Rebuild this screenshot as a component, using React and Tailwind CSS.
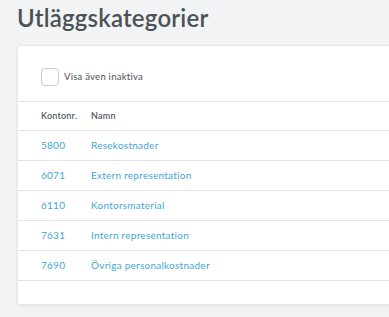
import React from "react";

const rows = [
  { nr: "5800", name: "Resekostnader" },
  { nr: "6071", name: "Extern representation" },
  { nr: "6110", name: "Kontorsmaterial" },
  { nr: "7631", name: "Intern representation" },
  { nr: "7690", name: "Övriga personalkostnader" },
];

const App = () => {
  return (
    <div
      className="h-[317px] w-[389px] overflow-hidden bg-[#f2f3f5] pl-[17px]"
      style={{ fontFamily: "Lato, 'Open Sans', sans-serif" }}
    >
      {/* Page title */}
      <h1 className="pt-[3px] text-[24px] leading-[30px] font-semibold tracking-[0.2px] text-[#4b5157]">
        Utläggskategorier
      </h1>

      {/* Card */}
      <div className="mt-[12px] w-[420px] rounded-[3px] border border-[#e6e7ea] bg-white shadow-[0_1px_3px_rgba(0,0,0,0.08)]">
        {/* Filter */}
        <div className="flex items-center gap-[5px] border-b border-[#e2e3e7] px-[23px] pt-[22px] pb-[15px]">
          <span className="h-[18px] w-[18px] rounded-[4px] border border-[#c9cbd0] bg-white"></span>
          <span className="text-[9.5px] tracking-[0.25px] text-[#4b5157]">Visa även inaktiva</span>
        </div>

        {/* Table */}
        <div className="flex h-[29px] items-center border-b border-[#e2e3e7] px-[23px] text-[9px] font-semibold tracking-[0.2px] text-[#555a60]">
          <span className="w-[50px]">Kontonr.</span>
          <span>Namn</span>
        </div>
        {rows.map((r) => (
          <div
            key={r.nr}
            className="flex h-[30px] items-center border-b border-[#e2e3e7] px-[23px] text-[10px] tracking-[0.25px] text-[#3fa6d8]"
          >
            <span className="w-[50px]">{r.nr}</span>
            <span>{r.name}</span>
          </div>
        ))}
        <div className="h-[23px]"></div>
      </div>
    </div>
  );
};

export default App;
